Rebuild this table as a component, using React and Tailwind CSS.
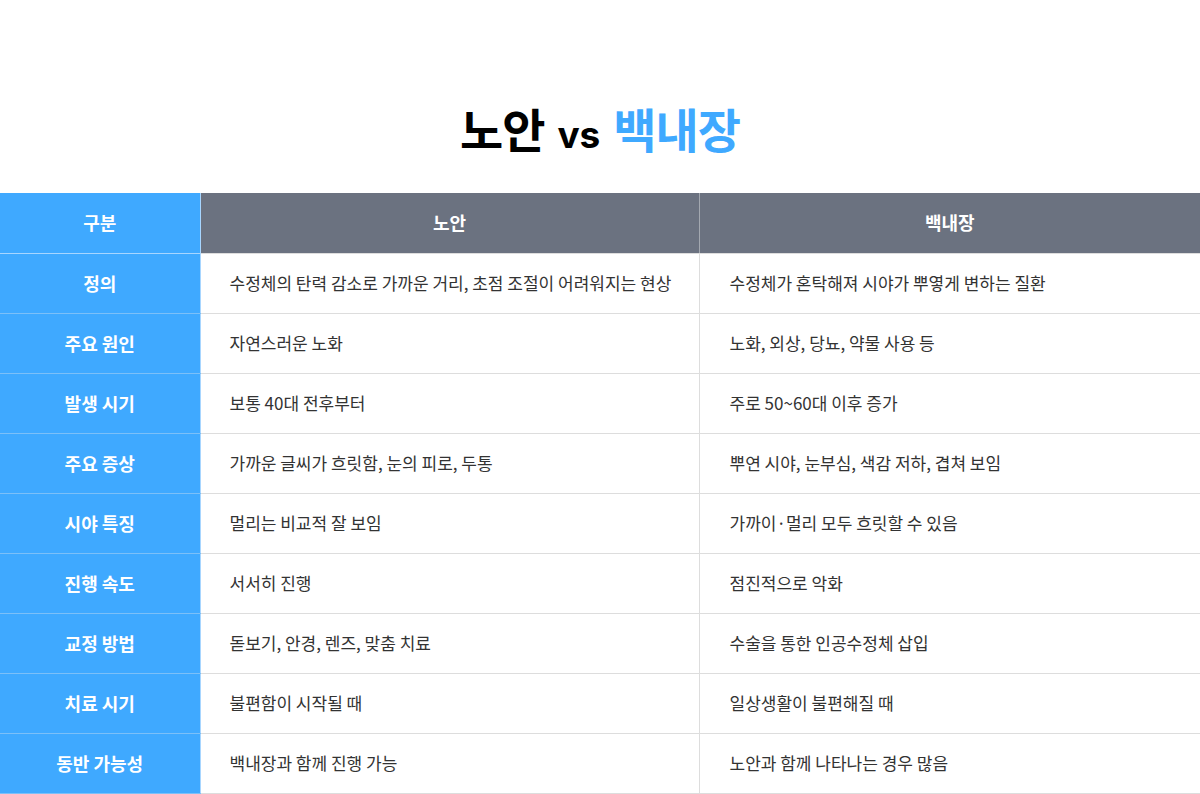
export default function App() {
  const rows = [
    ["정의", "수정체의 탄력 감소로 가까운 거리, 초점 조절이 어려워지는 현상", "수정체가 혼탁해져 시야가 뿌옇게 변하는 질환"],
    ["주요 원인", "자연스러운 노화", "노화, 외상, 당뇨, 약물 사용 등"],
    ["발생 시기", "보통 40대 전후부터", "주로 50~60대 이후 증가"],
    ["주요 증상", "가까운 글씨가 흐릿함, 눈의 피로, 두통", "뿌연 시야, 눈부심, 색감 저하, 겹쳐 보임"],
    ["시야 특징", "멀리는 비교적 잘 보임", "가까이·멀리 모두 흐릿할 수 있음"],
    ["진행 속도", "서서히 진행", "점진적으로 악화"],
    ["교정 방법", "돋보기, 안경, 렌즈, 맞춤 치료", "수술을 통한 인공수정체 삽입"],
    ["치료 시기", "불편함이 시작될 때", "일상생활이 불편해질 때"],
    ["동반 가능성", "백내장과 함께 진행 가능", "노안과 함께 나타나는 경우 많음"],
  ];
  const font = { fontFamily: '"Noto Sans CJK KR", "Noto Sans", sans-serif' };
  return (
    <div className="w-[1200px] h-[794px] bg-white overflow-hidden" style={font}>
      <div className="h-[193px] flex items-center justify-center pt-[70px] pb-[6px]">
        <h1 className="flex items-baseline gap-[13px] font-bold text-[47px] leading-none tracking-[-1px]">
          <span className="text-black">노안</span>
          <span className="text-[37px] text-black tracking-[0px]" style={{ fontFamily: 'Inter, "Liberation Sans", sans-serif' }}>vs</span>
          <span className="text-[#3fa9ff]">백내장</span>
        </h1>
      </div>
      <table className="w-[1200px] border-collapse table-fixed">
        <colgroup>
          <col className="w-[200px]" />
          <col className="w-[499px]" />
          <col className="w-[501px]" />
        </colgroup>
        <thead>
          <tr className="h-[60px]">
            <th className="bg-[#3fa9ff] text-white font-bold text-[18px] border-r border-r-[#a8d6ff] border-b border-b-[#a8d6ff] p-0">구분</th>
            <th className="bg-[#6b7280] text-white font-bold text-[18px] border-r border-r-[#a3a8b0] border-b border-b-[#ddd] p-0">노안</th>
            <th className="bg-[#6b7280] text-white font-bold text-[18px] border-b border-b-[#ddd] p-0">백내장</th>
          </tr>
        </thead>
        <tbody>
          {rows.map((r, i) => (
            <tr key={i} className="h-[60px]">
              <td className="bg-[#3fa9ff] text-white font-bold text-[18px] text-center border-r border-r-[#a8d6ff] border-b border-b-[#7cc0f8] p-0">{r[0]}</td>
              <td className="text-[#333] text-[17px] pl-[29px] border-r border-r-[#ddd] border-b border-b-[#ddd]">{r[1]}</td>
              <td className="text-[#333] text-[17px] pl-[30px] border-b border-b-[#ddd]">{r[2]}</td>
            </tr>
          ))}
        </tbody>
      </table>
    </div>
  );
}
